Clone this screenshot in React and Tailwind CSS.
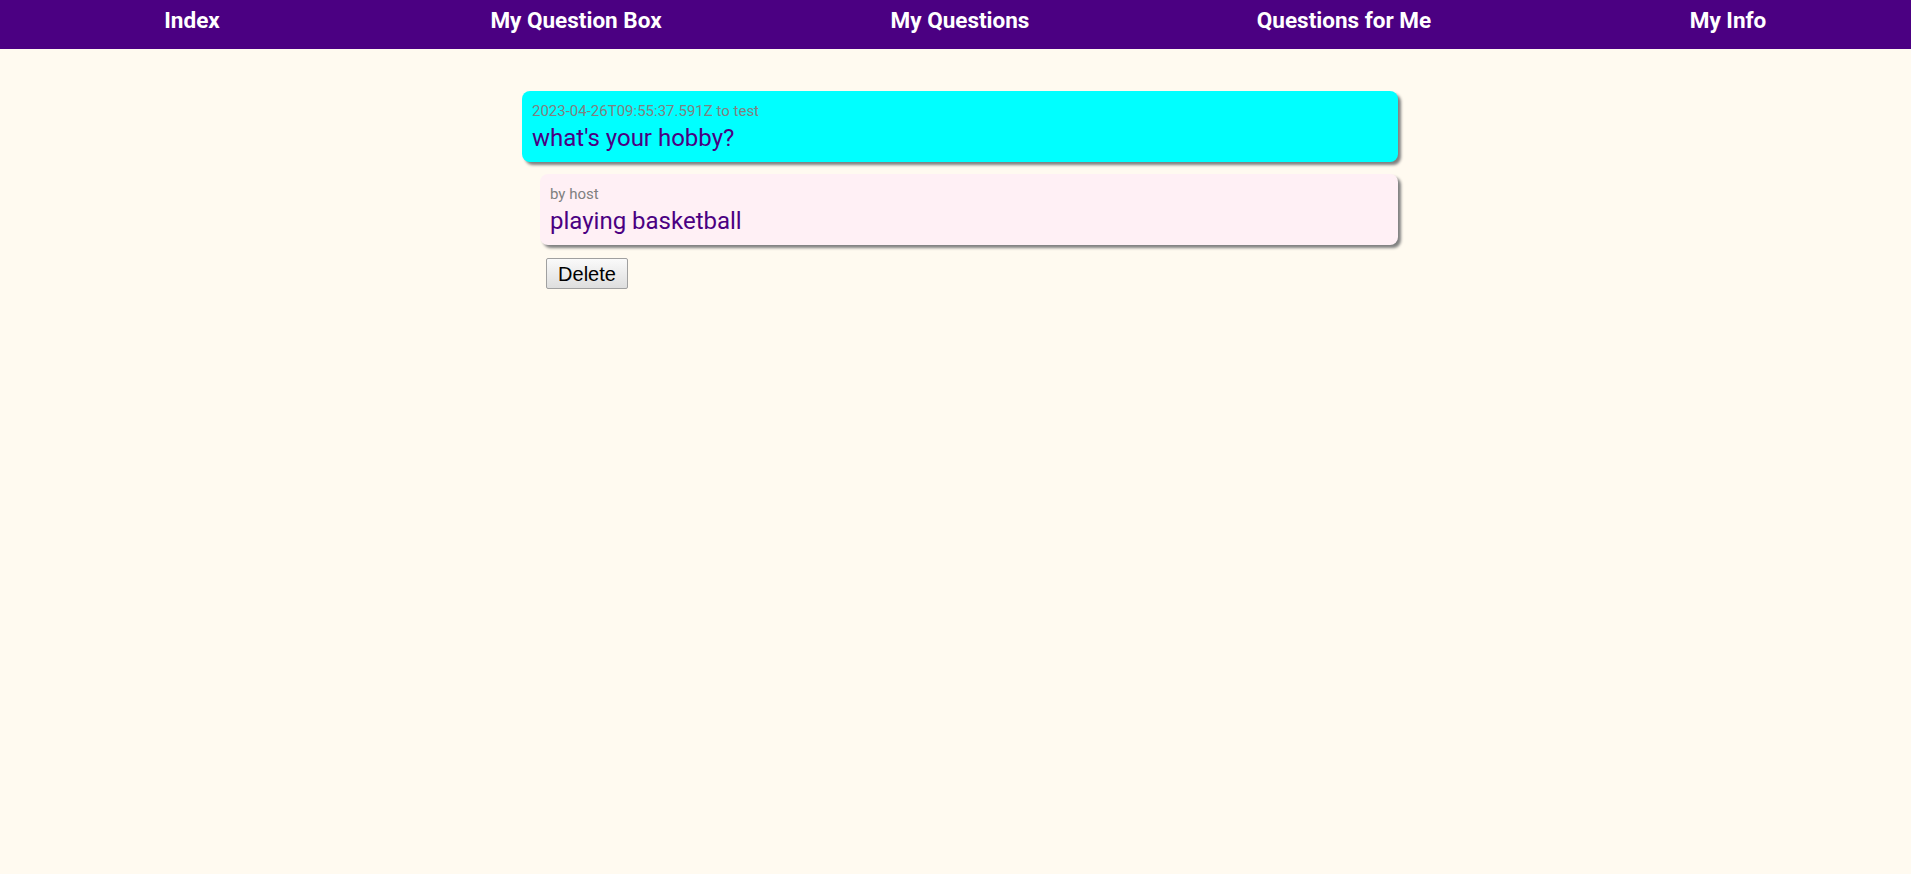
const navItems = ['Index', 'My Question Box', 'My Questions', 'Questions for Me', 'My Info'];

const Card = ({ meta, text, color, className = '' }) => (
  <div
    className={`rounded-lg pt-[11px] pb-[10px] px-[10px] shadow-[3px_3px_3px_#808080] ${color} ${className}`}
  >
    <div className="text-[15px] leading-[18px] text-[#808080]">{meta}</div>
    <div className="mt-1 text-2xl leading-[28px] text-[#4b0082]">{text}</div>
  </div>
);

const App = () => {
  return (
    <div className="min-h-screen w-full overflow-hidden bg-[#fffaf0] font-['Roboto','Liberation_Sans',sans-serif]">
      <div className="w-[1920px]">
        {/* Top navigation */}
        <nav className="grid h-[49px] grid-cols-5 bg-[#4b0082]">
          {navItems.map((item) => (
            <a
              key={item}
              href="#"
              className="mt-[2px] text-center text-[22.5px] font-bold leading-[36px] text-white"
            >
              {item}
            </a>
          ))}
        </nav>

        <main className="mx-auto w-[876px] pt-[42px]">
          <Card
            meta="2023-04-26T09:55:37.591Z to test"
            text="what's your hobby?"
            color="bg-[#00ffff]"
          />
          <div className="ml-[18px] mt-3">
            <Card meta="by host" text="playing basketball" color="bg-[#fff0f5]" />
            <button className="ml-[6px] mt-[13px] flex h-[31px] w-[82px] items-center justify-center rounded-[2px] border border-[#a0a0a0] bg-gradient-to-b from-[#fafafa] to-[#dedede] font-['Liberation_Sans',Arial,sans-serif] text-[20px] text-black">
              Delete
            </button>
          </div>
        </main>
      </div>
    </div>
  );
};

export default App;
